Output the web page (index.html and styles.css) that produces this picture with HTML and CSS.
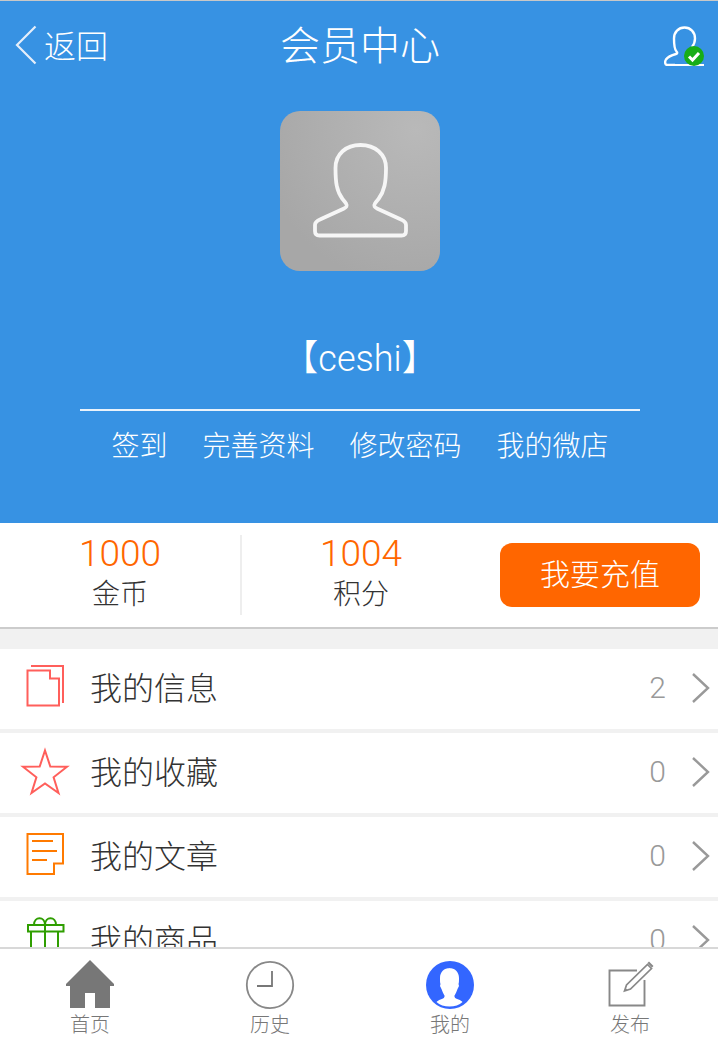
FILE: index.html
```html
<!DOCTYPE html>
<html lang="zh">
<head>
<meta charset="utf-8">
<title>会员中心</title>
<link rel="stylesheet" href="styles.css">
</head>
<body>
<div class="page">
  <div class="scroll">
    <header class="hero">
      <div class="topbar">
        <a class="back">
          <svg class="back-icon" width="24" height="40" viewBox="0 0 24 40"><path d="M21.500 1.500 3 20l18.500 18.500" fill="none" stroke="#e4eefa" stroke-width="2.200"/></svg>
          <span>返回</span>
        </a>
        <h1 class="title">会员中心</h1>
        <svg class="user-icon" width="42" height="42" viewBox="0 0 42 42">
          <path d="M11 41H3.500C1 41 .5 38 2 35.500c2-3 6-4.500 10-5.500 1.500-.3 1.500-1.500.5-2.500C10 25 10 20 10 14.500 10 8 14.500 3.500 20.500 3.500S31 8 31 14.500c0 3-1 6-3 8.500" fill="none" stroke="#fff" stroke-width="2.400"/>
          <path d="M2 41h38" stroke="#fff" stroke-width="2.200"/>
          <circle cx="30" cy="32" r="10" fill="#17ad17"/>
          <path d="M25 32.500l3.500 3.500 6.500-7" fill="none" stroke="#fff" stroke-width="3"/>
        </svg>
      </div>
      <div class="avatar">
        <svg width="100" height="96" viewBox="0 0 100 96">
          <path d="M50.500 2C36 2 25.500 11 25.500 25c0 14 1 23 7 31 3 3.500 5 6 4 7.500-.5 1-1.500 1.500-3 2.200L10 76.500C6.500 78 5 79.500 5 82v6c0 3 1.500 4.500 4.500 4.500h82c3 0 4.500-1.500 4.500-4.500v-6c0-2.500-1.500-4-5-5.500L67.500 65.700c-1.500-.7-2.500-1.200-3-2.200-1-1.500 1-4 4-7.500 6-8 7.500-17 7.500-31C76 11 65 2 50.500 2z" fill="none" stroke="#f6f6f6" stroke-width="3.800" stroke-linejoin="round"/>
        </svg>
      </div>
      <p class="name">【ceshi】</p>
      <nav class="links">
        <a>签到</a><a>完善资料</a><a>修改密码</a><a>我的微店</a>
      </nav>
    </header>

    <section class="stats">
      <div class="stat"><b>1000</b><span>金币</span></div>
      <div class="stat"><b>1004</b><span>积分</span></div>
      <div class="cta-wrap"><a class="cta">我要充值</a></div>
    </section>

    <ul class="menu">
      <li class="row">
        <svg class="row-icon" width="50" height="46" viewBox="0 0 50 46"><g fill="none" stroke="#ff5f5b" stroke-width="2"><path d="M7 1h32v37"/><path d="M3.500 5.500H26v8h9v27H3.500z" fill="#fff"/></g></svg>
        <span class="label">我的信息</span><span class="count">2</span>
        <svg class="chev" width="20" height="32" viewBox="0 0 20 32"><path d="M2 2l15 14L2 30" fill="none" stroke="#999" stroke-width="2.400"/></svg>
      </li>
      <li class="row">
        <svg class="row-icon" width="50" height="46" viewBox="0 0 50 46"><path d="M21 1.500l5.300 16 16.700.3-13.400 10.500 4.900 15.700L21 34.500 7.500 44l4.900-15.700L-1 17.800l16.700-.3z" fill="none" stroke="#ff5f5b" stroke-width="2"/></svg>
        <span class="label">我的收藏</span><span class="count">0</span>
        <svg class="chev" width="20" height="32" viewBox="0 0 20 32"><path d="M2 2l15 14L2 30" fill="none" stroke="#999" stroke-width="2.400"/></svg>
      </li>
      <li class="row">
        <svg class="row-icon" width="50" height="46" viewBox="0 0 50 46"><path d="M3.500 1H39v29.500H30V41H3.500z" fill="none" stroke="#ff7a00" stroke-width="2"/><path d="M8 8h21M8 18h25M8 27h15" stroke="#ff7a00" stroke-width="2" fill="none"/></svg>
        <span class="label">我的文章</span><span class="count">0</span>
        <svg class="chev" width="20" height="32" viewBox="0 0 20 32"><path d="M2 2l15 14L2 30" fill="none" stroke="#999" stroke-width="2.400"/></svg>
      </li>
      <li class="row">
        <svg class="row-icon" width="50" height="46" viewBox="0 0 50 46"><g fill="none" stroke="#2f9e00" stroke-width="2"><path d="M4 8h35.500v6.500H4zM7 14.500V46M21 8v38M34 14.500V46"/><path d="M10 8c0-9 11-9 11 0 0-9 11-9 11 0"/></g></svg>
        <span class="label">我的商品</span><span class="count">0</span>
        <svg class="chev" width="20" height="32" viewBox="0 0 20 32"><path d="M2 2l15 14L2 30" fill="none" stroke="#999" stroke-width="2.400"/></svg>
      </li>
    </ul>
  </div>

  <footer class="tabs">
    <a class="tab">
      <svg width="50" height="50" viewBox="0 0 50 50"><path d="M25 0 49 24v2h-4v22H30V33H20v15H5V26H1v-2z" fill="#777"/></svg>
      <span>首页</span>
    </a>
    <a class="tab">
      <svg width="50" height="50" viewBox="0 0 50 50"><circle cx="25" cy="25" r="23.200" fill="none" stroke="#888" stroke-width="1.800"/><path d="M27 11v15H12" fill="none" stroke="#777" stroke-width="1.800"/></svg>
      <span>历史</span>
    </a>
    <a class="tab">
      <svg width="50" height="50" viewBox="0 0 50 50"><circle cx="25" cy="25" r="24" fill="#3366ff"/><path d="M25 8c-6 0-10 4-10 10 0 3 0 5 .5 6l-.5 2 1.500 3c1 3 2 5 3 6.500.5 2-1 3-4 4-2 .8-3 1.500-4 2.500 3 3 8 4.500 13 4.500s10-1.500 13-4.500c-1-1-2-1.700-4-2.500-3-1-4.500-2-4-4 1-1.500 2-3.500 3-6.500l1.500-3-.5-2c.5-1 .5-3 .5-6 0-6-4-10-10-10z" fill="#fff"/></svg>
      <span>我的</span>
    </a>
    <a class="tab">
      <svg width="50" height="50" viewBox="0 0 50 50"><path d="M32 10.500H4.500v35h35V20" fill="none" stroke="#888" stroke-width="1.900"/><path d="M19.500 31l2-6 21-20.500 4 4-21 20.500z" fill="none" stroke="#888" stroke-width="1.700"/><path d="M44 1.500 48.500 6l-1.500 1.500L42.500 3zM19.500 31l1-3 2 2z" fill="#888"/></svg>
      <span>发布</span>
    </a>
  </footer>
</div>
</body>
</html>
```

FILE: styles.css
```css
* { box-sizing: border-box; }
html, body { margin: 0; padding: 0; }
body { font-family: "Noto Sans CJK SC", "Noto Sans", sans-serif; font-weight: 300; background: #f1f1f1; }
.page { width: 718px; height: 1044px; display: flex; flex-direction: column; overflow: hidden; }
.scroll { flex: 1; min-height: 0; overflow: hidden; }

.hero { height: 523px; background: #3792e3; border-top: 1px solid #c8c8c8; color: #fff; display: flex; flex-direction: column; align-items: center; }
.topbar { position: relative; width: 100%; height: 90px; display: flex; justify-content: center; align-items: flex-start; padding-top: 16px; padding-left: 2px; }
.back { position: absolute; left: 14px; top: 24px; display: flex; align-items: center; gap: 6px; font-size: 32px; line-height: 40px; }
.back span { margin-top: -2px; }
.title { margin: 0; font-size: 40px; line-height: 52px; font-weight: 300; }
.user-icon { position: absolute; left: 664px; top: 23px; }

.avatar { margin: 20px 0 0 2px; width: 160px; height: 160px; border-radius: 20px; background: radial-gradient(circle at 85% 12%, #b9b9b9, #a7a7a7 80%); display: flex; align-items: center; justify-content: center; }
.name { margin: 63px 0 0 2px; width: 560px; height: 77px; text-align: center; font-family: Roboto, "Noto Sans CJK SC", sans-serif; font-size: 36px; line-height: 50px; font-weight: 300; border-bottom: 2px solid #e9f2fb; }
.links { display: flex; gap: 35px; margin: 13px 0 0 2px; font-size: 28px; line-height: 40px; }

.stats { height: 106px; background: #fff; border-bottom: 2px solid #ccc; display: flex; align-items: flex-start; }
.stat { width: 242px; flex: none; margin-top: 12px; height: 80px; display: flex; flex-direction: column; align-items: center; border-right: 2px solid #eee; }
.stat:nth-child(2) { width: 238px; border-right: 0; }
.stat b { font-family: Roboto, sans-serif; font-weight: 300; font-size: 37px; line-height: 37px; color: #ff6600; }
.stat span { font-size: 28px; line-height: 40px; color: #333; }
.cta-wrap { flex: 1; padding: 20px 18px 0 18px; }
.cta { display: block; width: 200px; height: 64px; margin-left: auto; border-radius: 12px; background: #ff6600; color: #fff; font-size: 30px; line-height: 58px; text-align: center; }

.menu { list-style: none; margin: 20px 0 0; padding: 0; display: flex; flex-direction: column; gap: 4px; }
.row { height: 80px; flex: none; background: #fff; display: flex; align-items: center; padding-right: 7px; }
.row-icon { margin: -2px 0 0 24px; flex: none; overflow: visible; }
.label { margin-left: 16px; padding-bottom: 6px; flex: 1; font-size: 32px; line-height: 44px; color: #333; }
.count { font-family: Roboto, sans-serif; font-weight: 300; font-size: 30px; color: #999; margin: 0 25px 4px 0; }
.chev { flex: none; margin-bottom: 2px; }

.tabs { height: 97px; flex: none; background: #fff; border-top: 2px solid #d8d8d8; display: flex; padding-top: 11px; }
.tab { flex: 0 0 180px; display: flex; flex-direction: column; align-items: center; color: #777; font-size: 20px; line-height: 26px; }
.tab svg { display: block; flex: none; margin-bottom: 1px; }
```
